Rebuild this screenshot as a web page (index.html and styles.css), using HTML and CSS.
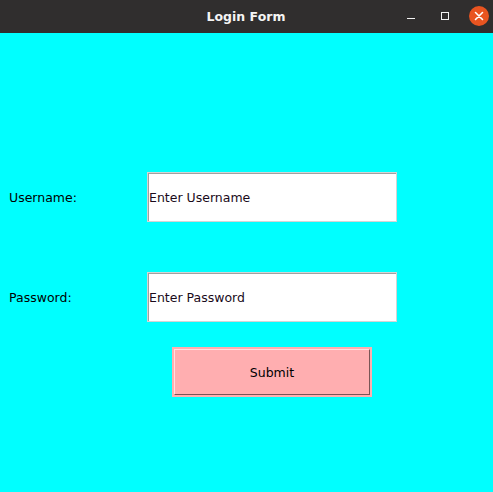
FILE: index.html
```html
<!DOCTYPE html>
<html>
<head>
<meta charset="utf-8">
<title>Login Form</title>
<link rel="stylesheet" href="styles.css">
</head>
<body>
<div class="window">
  <header class="titlebar">
    <span class="title">Login Form</span>
    <div class="controls">
      <svg class="ctl min" width="10" height="10" viewBox="0 0 10 10"><rect x="1" y="7" width="8" height="1" fill="#f2f2f2"/></svg>
      <svg class="ctl max" width="10" height="10" viewBox="0 0 10 10"><rect x="1.5" y="1.5" width="7" height="7" fill="none" stroke="#f2f2f2" stroke-width="1"/></svg>
      <svg class="close" width="20" height="20" viewBox="0 0 20 20"><circle cx="10" cy="10" r="10" fill="#e95420"/><path d="M6.5 6.5 L13.5 13.5 M13.5 6.5 L6.5 13.5" stroke="#ffffff" stroke-width="1.6" stroke-linecap="round"/></svg>
    </div>
  </header>
  <main class="content">
    <div class="form">
      <label class="label">Username:</label>
      <div class="entry">Enter Username</div>
      <label class="label">Password:</label>
      <div class="entry">Enter Password</div>
    </div>
    <div class="btn-row">
      <div class="button"><span>Submit</span></div>
    </div>
  </main>
</div>
</body>
</html>
```

FILE: styles.css
```css
* { box-sizing: border-box; }
html, body {
  margin: 0;
  padding: 0;
  width: 493px;
  height: 492px;
  overflow: hidden;
}
.window {
  width: 493px;
  height: 492px;
  display: flex;
  flex-direction: column;
  font-family: "DejaVu Sans", sans-serif;
}
.titlebar {
  height: 33px;
  flex: none;
  background: #302e2e;
  position: relative;
  display: flex;
  align-items: center;
  justify-content: center;
}
.title {
  color: #f4f4f4;
  font-weight: bold;
  font-size: 12.5px;
  margin-left: -1px;
}
.controls {
  position: absolute;
  right: 4px;
  top: 6px;
  display: flex;
  align-items: center;
}
.min { margin-right: 24px; }
.max { margin-right: 19px; }
.content {
  flex: 1;
  background: #00ffff;
  padding-top: 139px;
}
.form {
  display: grid;
  grid-template-columns: 147px 250px;
  row-gap: 50px;
  align-items: center;
}
.label {
  font-size: 12.5px;
  color: #000;
  padding-left: 9px;
}
.entry {
  height: 50px;
  background: #fff;
  border: 1px solid #d4d4d4;
  box-shadow: inset 1px 1px 0 #a0a0a0;
  font-size: 12.5px;
  color: #1a0a1a;
  display: flex;
  align-items: center;
  padding-left: 1px;
}
.btn-row {
  padding-top: 25px;
  padding-left: 172px;
}
.button {
  width: 200px;
  height: 50px;
  background: #ffaeb0;
  padding: 2px;
}
.button span {
  display: flex;
  height: 100%;
  align-items: center;
  justify-content: center;
  border-top: 1px solid #ffe0e1;
  border-left: 1px solid #ffe0e1;
  border-right: 1px solid #7a5556;
  border-bottom: 1px solid #7a5556;
  font-size: 12.5px;
  color: #000;
}
```
